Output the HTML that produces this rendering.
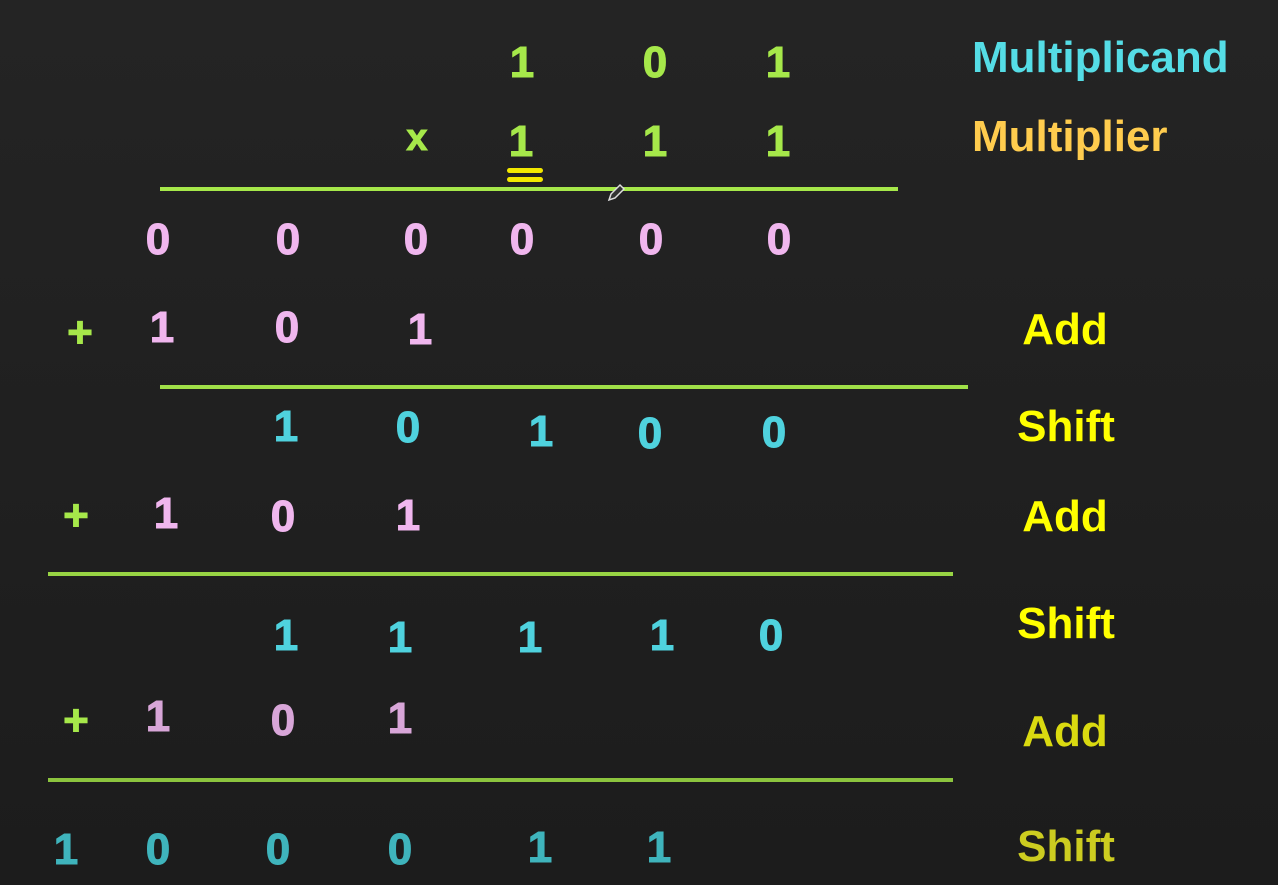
<!DOCTYPE html>
<html><head><meta charset="utf-8"><style>
html,body{margin:0;padding:0}
body{width:1278px;height:885px;overflow:hidden;position:relative;background:linear-gradient(#242424,#1c1c1c);font-family:"Liberation Sans",sans-serif;font-weight:bold}
.d{position:absolute;transform:translate(-50%,-50%);font-size:44px;line-height:1;-webkit-text-stroke:1px currentColor}
.g{color:#a6e84a}.p{color:#f0b6ee}.p2{color:#d8a6d8}.c{color:#4fd2de}.c2{color:#3fb4bc}
.l{position:absolute;height:4px;background:#98d444}
.t{position:absolute;transform:translate(-50%,-50%);font-size:44px;line-height:1;color:#ffff00}
</style></head><body>
<span class="d g" style="left:522px;top:63px">1</span>
<span class="d g" style="left:655px;top:63px">0</span>
<span class="d g" style="left:778px;top:63px">1</span>
<span class="d g" style="left:417px;top:138px;font-size:38px">x</span>
<span class="d g" style="left:521px;top:142px">1</span>
<span class="d g" style="left:655px;top:142px">1</span>
<span class="d g" style="left:778px;top:142px">1</span>
<div style="position:absolute;left:507px;top:168px;width:36px;height:5px;background:#f2e800;border-radius:3px"></div>
<div style="position:absolute;left:507px;top:177px;width:36px;height:5px;background:#f2e800;border-radius:3px"></div>
<div class="l" style="left:160px;top:187px;width:738px;background:#a6e84a"></div>
<svg style="position:absolute;left:606px;top:183px" width="20" height="20" viewBox="0 0 20 20"><path d="M3 17 L5 11 L14 2 L18 6 L9 15 Z" fill="#333" stroke="#ddd" stroke-width="1.5"/></svg>
<span class="d p" style="left:158px;top:240px">0</span>
<span class="d p" style="left:288px;top:240px">0</span>
<span class="d p" style="left:416px;top:240px">0</span>
<span class="d p" style="left:522px;top:240px">0</span>
<span class="d p" style="left:651px;top:240px">0</span>
<span class="d p" style="left:779px;top:240px">0</span>
<span class="d g" style="left:80px;top:333px">+</span>
<span class="d p" style="left:162px;top:328px">1</span>
<span class="d p" style="left:287px;top:328px">0</span>
<span class="d p" style="left:420px;top:330px">1</span>
<div class="l" style="left:160px;top:385px;width:808px;background:#a0e048"></div>
<span class="d c" style="left:286px;top:427px">1</span>
<span class="d c" style="left:408px;top:428px">0</span>
<span class="d c" style="left:541px;top:432px">1</span>
<span class="d c" style="left:650px;top:434px">0</span>
<span class="d c" style="left:774px;top:433px">0</span>
<span class="d g" style="left:76px;top:516px">+</span>
<span class="d p" style="left:166px;top:514px">1</span>
<span class="d p" style="left:283px;top:517px">0</span>
<span class="d p" style="left:408px;top:516px">1</span>
<div class="l" style="left:48px;top:572px;width:905px"></div>
<span class="d c" style="left:286px;top:636px">1</span>
<span class="d c" style="left:400px;top:638px">1</span>
<span class="d c" style="left:530px;top:638px">1</span>
<span class="d c" style="left:662px;top:636px">1</span>
<span class="d c" style="left:771px;top:636px">0</span>
<span class="d g" style="left:76px;top:721px">+</span>
<span class="d p2" style="left:158px;top:717px">1</span>
<span class="d p2" style="left:283px;top:721px">0</span>
<span class="d p2" style="left:400px;top:719px">1</span>
<div class="l" style="left:48px;top:778px;width:905px;background:#8cc43e"></div>
<span class="d c2" style="left:66px;top:850px">1</span>
<span class="d c2" style="left:158px;top:850px">0</span>
<span class="d c2" style="left:278px;top:850px">0</span>
<span class="d c2" style="left:400px;top:850px">0</span>
<span class="d c2" style="left:540px;top:848px">1</span>
<span class="d c2" style="left:659px;top:848px">1</span>
<span style="position:absolute;left:972px;top:36px;font-size:44px;line-height:1;color:#55dde6">Multiplicand</span>
<span style="position:absolute;left:972px;top:115px;font-size:44px;line-height:1;color:#ffcc4e">Multiplier</span>
<span class="t" style="left:1065px;top:330px">Add</span>
<span class="t" style="left:1066px;top:427px">Shift</span>
<span class="t" style="left:1065px;top:517px">Add</span>
<span class="t" style="left:1066px;top:624px">Shift</span>
<span class="t" style="left:1065px;top:732px;color:#dada10">Add</span>
<span class="t" style="left:1066px;top:847px;color:#cccc20">Shift</span>
</body></html>
